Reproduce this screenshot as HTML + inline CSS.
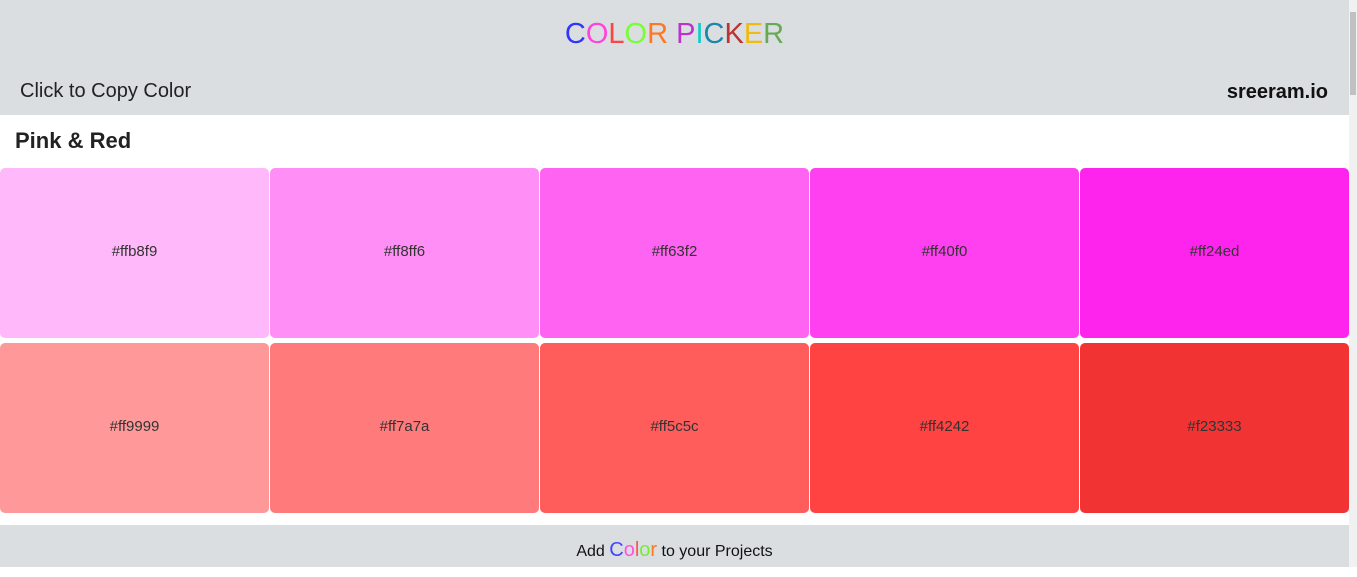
<!DOCTYPE html>
<html><head><style>
body{margin:0;width:1357px;height:567px;overflow:hidden;font-family:"Liberation Sans","DejaVu Sans",sans-serif;background:#fff;position:relative}
.main{position:absolute;left:0;top:0;width:1349px;height:567px}
.hdr{background:#dadee1;height:115px;position:relative}
.title{position:absolute;top:18px;left:0;width:1349px;text-align:center;font-size:29px}
.l{position:absolute;left:20px;top:80px;font-size:20px;color:#222}
.r{position:absolute;right:21px;top:81px;font-size:20px;font-weight:bold;color:#111}
h2{position:absolute;left:15px;top:128px;margin:0;font-size:22px;font-weight:bold;color:#222}
.grid{position:absolute;top:168px;left:0;width:1349px;display:grid;grid-template-columns:repeat(5,1fr);column-gap:1px;row-gap:5px}
.grid div{height:170px;border-radius:5px;display:flex;align-items:center;justify-content:center;font-size:15px;color:#333;padding-bottom:4px;box-sizing:border-box}
.ftr{position:absolute;top:525px;left:0;width:1349px;height:42px;background:#dadee1;text-align:center;font-size:16px;line-height:50px;color:#111}
.sb{position:absolute;right:0;top:0;width:8px;height:567px;background:#f1f1f1}
.sb div{position:absolute;left:1px;top:12px;width:6px;height:83px;background:#c1c1c1}
</style></head><body>
<div class="main">
<div class="hdr">
<div class="title"><span style="color:#3333ff">C</span><span style="color:#ff44dd">O</span><span style="color:#ff4444">L</span><span style="color:#77ff33">O</span><span style="color:#ff7722">R</span> <span style="color:#bb33cc">P</span><span style="color:#11cccc">I</span><span style="color:#1a88aa">C</span><span style="color:#bb3333">K</span><span style="color:#eebb11">E</span><span style="color:#66aa55">R</span></div>
<div class="l">Click to Copy Color</div>
<div class="r">sreeram.io</div>
</div>
<h2>Pink &amp; Red</h2>
<div class="grid">
<div style="background:#ffb8f9">#ffb8f9</div>
<div style="background:#ff8ff6">#ff8ff6</div>
<div style="background:#ff63f2">#ff63f2</div>
<div style="background:#ff40f0">#ff40f0</div>
<div style="background:#ff24ed">#ff24ed</div>
<div style="background:#ff9999">#ff9999</div>
<div style="background:#ff7a7a">#ff7a7a</div>
<div style="background:#ff5c5c">#ff5c5c</div>
<div style="background:#ff4242">#ff4242</div>
<div style="background:#f23333">#f23333</div>
</div>
<div class="ftr">Add <span style="font-size:20px"><span style="color:#4444ff">C</span><span style="color:#ff55dd">o</span><span style="color:#ff5555">l</span><span style="color:#77ee33">o</span><span style="color:#ff7722">r</span></span> to your Projects</div>
</div>
<div class="sb"><div></div></div>
</body></html>
